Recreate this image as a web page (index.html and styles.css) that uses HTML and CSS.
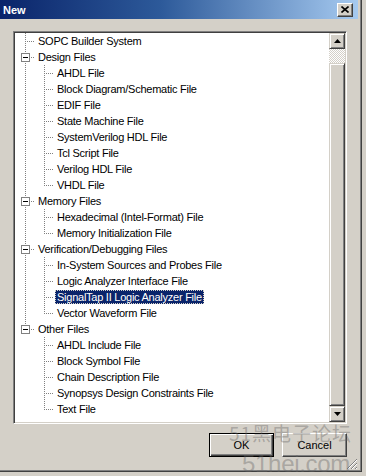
FILE: index.html
```html
<!DOCTYPE html>
<html lang="en">
<head>
  <meta charset="UTF-8" />
  <title>New</title>
  <link rel="stylesheet" href="styles.css">
</head>
<body>
  <div class="window">
    <!-- タイトルバー -->
    <div class="titlebar">
      <span class="title">New</span>
      <span class="close">
        <svg width="8" height="7" viewBox="0 0 8 7"><path d="M0.5 0.5 L7.5 6.5 M7.5 0.5 L0.5 6.5" stroke="#000" stroke-width="1.6" fill="none"/></svg>
      </span>
    </div>

    <div class="content">
      <div class="tree">
        <div class="list">
          <div class="row"><span class="cell tee"></span><span class="label">SOPC Builder System</span></div>
          <div class="row"><span class="cell tee"><i class="toggle"></i></span><span class="label">Design Files</span></div>
          <div class="row"><span class="cell pipe"></span><span class="cell tee"></span><span class="label">AHDL File</span></div>
          <div class="row"><span class="cell pipe"></span><span class="cell tee"></span><span class="label">Block Diagram/Schematic File</span></div>
          <div class="row"><span class="cell pipe"></span><span class="cell tee"></span><span class="label">EDIF File</span></div>
          <div class="row"><span class="cell pipe"></span><span class="cell tee"></span><span class="label">State Machine File</span></div>
          <div class="row"><span class="cell pipe"></span><span class="cell tee"></span><span class="label">SystemVerilog HDL File</span></div>
          <div class="row"><span class="cell pipe"></span><span class="cell tee"></span><span class="label">Tcl Script File</span></div>
          <div class="row"><span class="cell pipe"></span><span class="cell tee"></span><span class="label">Verilog HDL File</span></div>
          <div class="row"><span class="cell pipe"></span><span class="cell ell"></span><span class="label">VHDL File</span></div>
          <div class="row"><span class="cell tee"><i class="toggle"></i></span><span class="label">Memory Files</span></div>
          <div class="row"><span class="cell pipe"></span><span class="cell tee"></span><span class="label">Hexadecimal (Intel-Format) File</span></div>
          <div class="row"><span class="cell pipe"></span><span class="cell ell"></span><span class="label">Memory Initialization File</span></div>
          <div class="row"><span class="cell tee"><i class="toggle"></i></span><span class="label">Verification/Debugging Files</span></div>
          <div class="row"><span class="cell pipe"></span><span class="cell tee"></span><span class="label">In-System Sources and Probes File</span></div>
          <div class="row"><span class="cell pipe"></span><span class="cell tee"></span><span class="label">Logic Analyzer Interface File</span></div>
          <div class="row"><span class="cell pipe"></span><span class="cell tee"></span><span class="label selected">SignalTap II Logic Analyzer File</span></div>
          <div class="row"><span class="cell pipe"></span><span class="cell ell"></span><span class="label">Vector Waveform File</span></div>
          <div class="row"><span class="cell ell"><i class="toggle"></i></span><span class="label">Other Files</span></div>
          <div class="row"><span class="cell"></span><span class="cell tee"></span><span class="label">AHDL Include File</span></div>
          <div class="row"><span class="cell"></span><span class="cell tee"></span><span class="label">Block Symbol File</span></div>
          <div class="row"><span class="cell"></span><span class="cell tee"></span><span class="label">Chain Description File</span></div>
          <div class="row"><span class="cell"></span><span class="cell tee"></span><span class="label">Synopsys Design Constraints File</span></div>
          <div class="row"><span class="cell"></span><span class="cell ell"></span><span class="label">Text File</span></div>
        </div>

        <!-- スクロールバー -->
        <div class="scrollbar">
          <span class="arrow">
            <svg width="7" height="4" viewBox="0 0 7 4"><path d="M3.5 0 L7 4 L0 4 Z" fill="#000"/></svg>
          </span>
          <span class="track"></span>
          <span class="thumb"></span>
          <span class="arrow">
            <svg width="7" height="4" viewBox="0 0 7 4"><path d="M0 0 L7 0 L3.5 4 Z" fill="#000"/></svg>
          </span>
        </div>
      </div>

      <div class="actions">
        <button class="btn default">OK</button>
        <button class="btn">Cancel</button>
      </div>
    </div>

    <svg class="grip" width="12" height="12" viewBox="0 0 12 12">
      <path d="M11 1 L1 11 M11 5 L5 11 M11 9 L9 11" stroke="#808080" stroke-width="1" fill="none"/>
      <path d="M11 2 L2 11 M11 6 L6 11 M11 10 L10 11" stroke="#fff" stroke-width="1" fill="none"/>
    </svg>

    <!-- 透かし -->
    <div class="watermark">
      <span class="wm-cn">51黑电子论坛</span>
      <span class="wm-en">51hei.com</span>
    </div>
  </div>
</body>
</html>
```

FILE: styles.css
```css
body {
  margin: 0;
  width: 366px;
  height: 476px;
  overflow: hidden;
  background: #d4d0c8;
  font-family: "Liberation Sans", Arial, sans-serif;
  font-size: 11px;
}

.window {
  position: relative;
  width: 358px;
  height: 471px;
  padding-right: 3px;
  background: #d4d0c8;
  border-right: 1px solid #404040;
  border-bottom: 1px solid #404040;
  box-shadow: inset -1px -1px #808080;
}

.titlebar {
  height: 19px;
  display: flex;
  align-items: center;
  justify-content: space-between;
  padding: 0 5px 0 3px;
  background: linear-gradient(to right, #0a246a, #2d5a9a 45%, #a6caf0);
  color: #fff;
  font-weight: bold;
}

.close {
  width: 16px;
  height: 14px;
  box-sizing: border-box;
  display: flex;
  align-items: center;
  justify-content: center;
  background: #d4d0c8;
  border: 1px solid;
  border-color: #fff #404040 #404040 #fff;
  box-shadow: inset -1px -1px #808080;
}

.content {
  padding: 12px 0 0 13px;
}

/* ツリー */
.tree {
  width: 334px;
  height: 393px;
  box-sizing: border-box;
  display: flex;
  padding: 1px;
  background: #fff;
  border: 1px solid;
  border-color: #808080 #fff #fff #808080;
  box-shadow: inset 1px 1px #404040, inset -1px -1px #d4d0c8;
}

.list {
  flex: 1;
}

.row {
  display: flex;
  align-items: center;
  height: 16px;
}

.cell {
  flex: none;
  width: 19px;
  height: 16px;
  display: flex;
  align-items: center;
  background-repeat: no-repeat;
}

.cell.pipe {
  background-image: repeating-linear-gradient(to bottom, #808080 0 1px, transparent 1px 2px);
  background-position: 10px 0;
  background-size: 1px 16px;
}

.cell.tee {
  background-image:
    repeating-linear-gradient(to right, #808080 0 1px, transparent 1px 2px),
    repeating-linear-gradient(to bottom, #808080 0 1px, transparent 1px 2px);
  background-position: 12px 8px, 10px 0;
  background-size: 8px 1px, 1px 16px;
}

.cell.ell {
  background-image:
    repeating-linear-gradient(to right, #808080 0 1px, transparent 1px 2px),
    repeating-linear-gradient(to bottom, #808080 0 1px, transparent 1px 2px);
  background-position: 12px 8px, 10px 0;
  background-size: 8px 1px, 1px 9px;
}

.toggle {
  width: 9px;
  height: 9px;
  box-sizing: border-box;
  margin-left: 6px;
  border: 1px solid #808080;
  background: #fff;
  display: flex;
  align-items: center;
  justify-content: center;
}

.toggle::after {
  content: "";
  width: 5px;
  height: 1px;
  background: #000;
}

.label {
  margin-left: 2px;
  padding: 0 2px;
  line-height: 14px;
  white-space: nowrap;
  letter-spacing: -0.25px;
  color: #000;
}

.label.selected {
  background: #0a246a;
  color: #fff;
  outline: 1px dotted #d4d0c8;
  outline-offset: -1px;
}

/* スクロールバー */
.scrollbar {
  width: 16px;
  display: flex;
  flex-direction: column;
}

.arrow,
.thumb {
  box-sizing: border-box;
  background: #d4d0c8;
  border: 1px solid;
  border-color: #d4d0c8 #404040 #404040 #d4d0c8;
  box-shadow: inset 1px 1px #fff, inset -1px -1px #808080;
}

.arrow {
  height: 16px;
  display: flex;
  align-items: center;
  justify-content: center;
}

.track {
  height: 14px;
  background: repeating-conic-gradient(#fff 0 25%, #d4d0c8 0 50%) 0 0 / 2px 2px;
}

.thumb {
  flex: 1;
}

/* ボタン */
.actions {
  width: 334px;
  display: flex;
  justify-content: flex-end;
  gap: 8px;
  margin-top: 9px;
}

.btn {
  width: 65px;
  height: 24px;
  padding: 0;
  font: inherit;
  color: #000;
  background: #d4d0c8;
  border: 1px solid;
  border-color: #fff #404040 #404040 #fff;
  box-shadow: inset -1px -1px #808080, inset 1px 1px #d4d0c8;
}

.btn.default {
  border-color: #000;
  box-shadow: inset 1px 1px #fff, inset -1px -1px #404040, inset -2px -2px #808080;
}

.grip {
  position: absolute;
  right: 3px;
  bottom: 1px;
}

.watermark {
  position: absolute;
  left: 229px;
  top: 420px;
  white-space: nowrap;
  pointer-events: none;
  color: rgba(100, 100, 100, 0.4);
}

.wm-cn {
  display: block;
  font-family: "Noto Sans CJK SC", sans-serif;
  font-size: 19px;
  line-height: 26px;
  letter-spacing: 1px;
}

.wm-en {
  display: block;
  margin: 6px 0 0 13px;
  font-size: 24px;
  line-height: 24px;
  letter-spacing: -0.3px;
}
```
